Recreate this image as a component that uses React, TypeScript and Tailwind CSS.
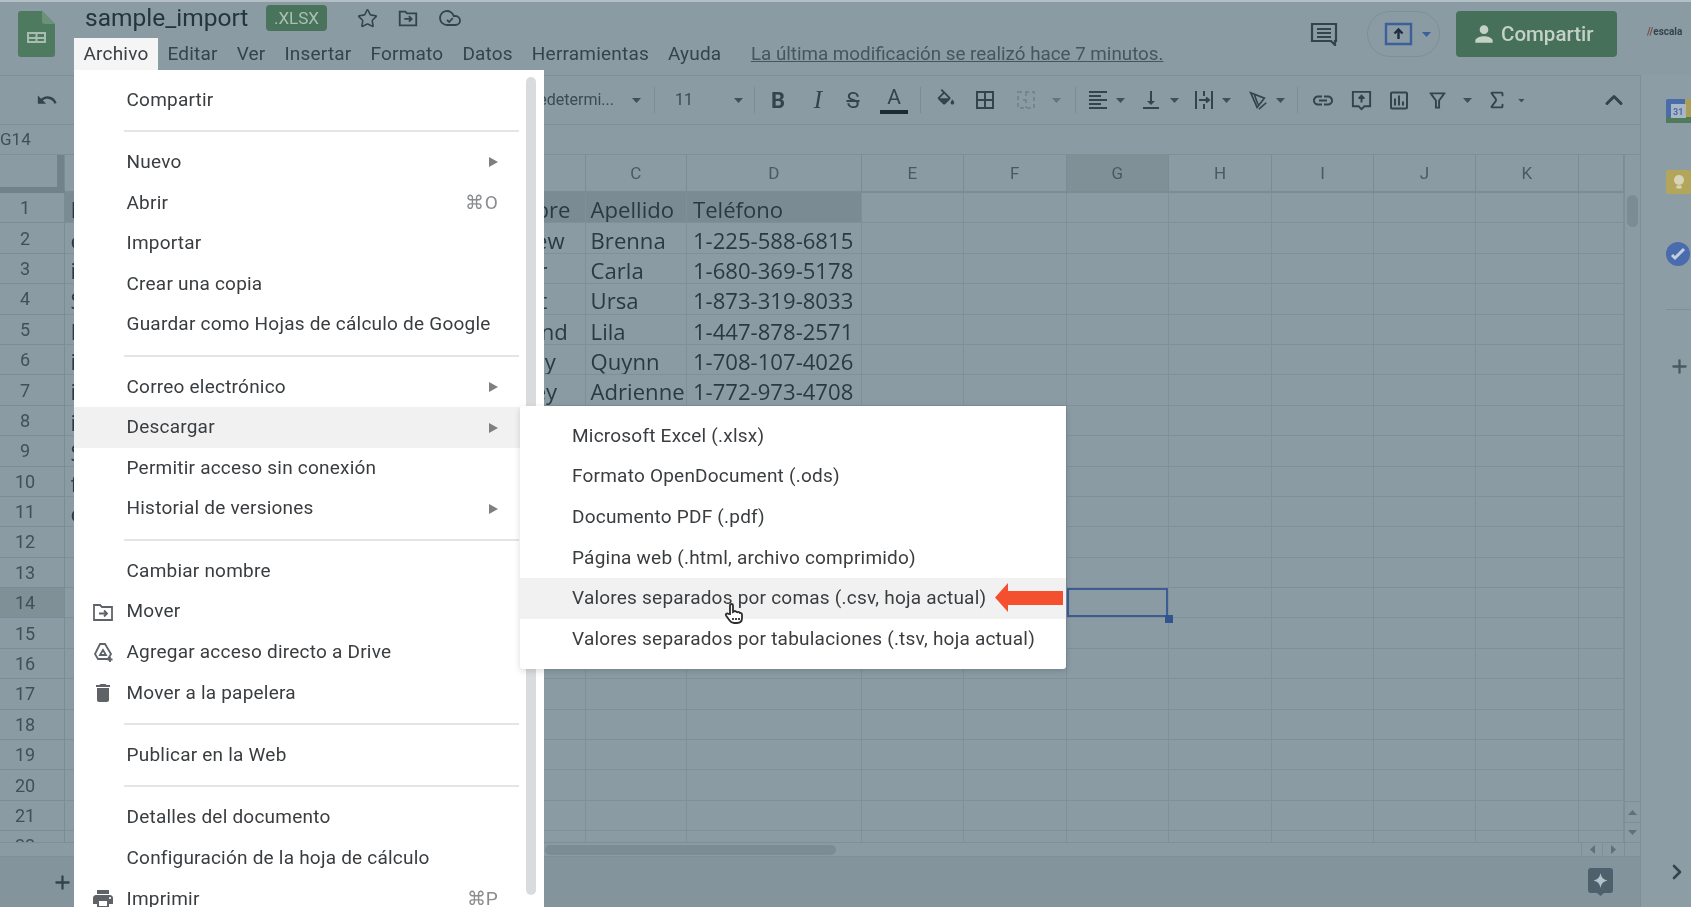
import { ChevronRight, ChevronUp, Plus, Sigma, Star } from "lucide-react";

const cols = [
  "w-[414px]",
  "w-[106.6px]",
  "w-[101.4px]",
  "w-[174.7px]",
  "w-[102.3px]",
  "w-[102.6px]",
  "w-[102.4px]",
  "w-[103px]",
  "w-[102px]",
  "w-[102px]",
  "w-[103px]",
  "w-[45px]",
];
const colNames = ["A", "B", "C", "D", "E", "F", "G", "H", "I", "J", "K", ""];

const sheetRows = [
  ["Empresa", "Nombre", "Apellido", "Teléfono"],
  ["eBay", "Andrew", "Brenna", "1-225-588-6815"],
  ["iTech", "Abner", "Carla", "1-680-369-5178"],
  ["Sanmina", "Albert", "Ursa", "1-873-319-8033"],
  ["Intel", "Armand", "Lila", "1-447-878-2571"],
  ["iNet", "Johnny", "Quynn", "1-708-107-4026"],
  ["iRobot", "Harvey", "Adrienne", "1-772-973-4708"],
  ["iCloud"],
  ["Sun"],
  ["fTech"],
  ["eTrade"],
];

const topMenus = ["Editar", "Ver", "Insertar", "Formato", "Datos", "Herramientas", "Ayuda"];

const mat = {
  undo: "M12.5 8c-2.65 0-5.05.99-6.9 2.6L2 7v9h9l-3.62-3.62c1.39-1.16 3.16-1.88 5.12-1.88 3.54 0 6.55 2.31 7.6 5.5l2.37-.78C21.08 11.03 17.15 8 12.5 8z",
  fill: "M16.56 8.94L7.62 0 6.21 1.41l2.38 2.38-5.15 5.15c-.59.59-.59 1.54 0 2.12l5.5 5.5c.29.29.68.44 1.06.44s.77-.15 1.06-.44l5.5-5.5c.59-.58.59-1.53 0-2.12zM5.21 10L10 5.21 14.79 10H5.21zM19 11.5s-2 2.17-2 3.5c0 1.1.9 2 2 2s2-.9 2-2c0-1.33-2-3.5-2-3.5z",
  borders: "M3 3v18h18V3H3zm8 16H5v-6h6v6zm0-8H5V5h6v6zm8 8h-6v-6h6v6zm0-8h-6V5h6v6z",
  align: "M15 15H3v2h12v-2zm0-8H3v2h12V7zM3 13h18v-2H3v2zm0 8h18v-2H3v2zM3 3v2h18V3H3z",
  valign: "M16 13h-3V3h-2v10H8l4 4 4-4zM4 19v2h16v-2H4z",
  link: "M3.9 12c0-1.71 1.39-3.1 3.1-3.1h4V7H7c-2.76 0-5 2.24-5 5s2.24 5 5 5h4v-1.9H7c-1.71 0-3.1-1.39-3.1-3.1zM8 13h8v-2H8v2zm9-6h-4v1.9h4c1.71 0 3.1 1.39 3.1 3.1s-1.39 3.1-3.1 3.1h-4V17h4c2.76 0 5-2.24 5-5s-2.24-5-5-5z",
  chart: "M19 3H5c-1.1 0-2 .9-2 2v14c0 1.1.9 2 2 2h14c1.1 0 2-.9 2-2V5c0-1.1-.9-2-2-2zm0 16H5V5h14v14zM7 10h2v7H7zm4-3h2v10h-2zm4 6h2v4h-2z",
  trash: "M6 19c0 1.1.9 2 2 2h8c1.1 0 2-.9 2-2V7H6v12zM19 4h-3.5l-1-1h-5l-1 1H5v2h14V4z",
  print: "M19 8H5c-1.66 0-3 1.34-3 3v6h4v4h12v-4h4v-6c0-1.66-1.34-3-3-3zm-3 11H8v-5h8v5zm3-7c-.55 0-1-.45-1-1s.45-1 1-1 1 .45 1 1-.45 1-1 1zm-1-9H6v4h12V3z",
  person: "M12 12c2.21 0 4-1.79 4-4s-1.79-4-4-4-4 1.79-4 4 1.79 4 4 4zm0 2c-2.67 0-8 1.34-8 4v2h16v-2c0-2.66-5.33-4-8-4z",
};

function MatIcon({ d, className }: { d: string; className?: string }) {
  return (
    <svg viewBox="0 0 24 24" className={className} fill="currentColor">
      <path d={d} />
    </svg>
  );
}

function Caret({ className }: { className?: string }) {
  return (
    <span className={`flex w-4 justify-center ${className ?? ""}`}>
      <svg width="9" height="5" viewBox="0 0 9 5" fill="#3f5057">
        <path d="M0 0h9L4.5 5z" />
      </svg>
    </span>
  );
}

function Sep({ className }: { className?: string }) {
  return <span className={`h-[26px] w-px bg-[#7b8c95] ${className ?? ""}`} />;
}

function ToolIcon({ className, children }: { className?: string; children: React.ReactNode }) {
  return <span className={`flex h-6 w-6 items-center justify-center text-[#33444b] ${className ?? ""}`}>{children}</span>;
}

function Toolbar() {
  return (
    <div className="flex h-[50px] items-center border-y border-[#7e8f98] bg-[#8a9ba4] pl-[36px] text-[#33444b]">
      <MatIcon d={mat.undo} className="h-[24px] w-[22px]" />
      <span className="w-[556px] text-right text-[16px] text-[#3a4b52]">Predetermi...</span>
      <Caret className="ml-[14px]" />
      <Sep className="ml-[10px]" />
      <span className="ml-[20px] w-[15px] text-[16px] text-[#3a4b52]">11</span>
      <Caret className="ml-[40px]" />
      <Sep className="ml-[8px]" />
      <ToolIcon className="ml-[11px] text-[22px] font-bold">B</ToolIcon>
      <ToolIcon className="ml-[16px] font-['Liberation_Serif',serif] text-[25px] font-medium italic">I</ToolIcon>
      <ToolIcon className="ml-[11px] text-[22px] line-through">S</ToolIcon>
      <ToolIcon className="ml-[17px] flex-col text-[21px] leading-[21px]">
        A<span className="mt-[2px] h-[4px] w-[28px] shrink-0 bg-[#1c2b33]" />
      </ToolIcon>
      <Sep className="ml-[14px]" />
      <ToolIcon className="ml-[13px]">
        <MatIcon d={mat.fill} className="h-[22px] w-[22px]" />
      </ToolIcon>
      <ToolIcon className="ml-[15px]">
        <MatIcon d={mat.borders} className="h-[24px] w-[24px]" />
      </ToolIcon>
      <ToolIcon className="ml-[17px] text-[#75868e]">
        <svg viewBox="0 0 24 24" className="h-6 w-6" fill="none" stroke="currentColor" strokeWidth="2" strokeDasharray="4 3">
          <path d="M4 4h16v16H4zM12 4v16" />
          <path d="M9 12h6" />
        </svg>
      </ToolIcon>
      <Caret className="ml-[10px] opacity-50" />
      <Sep className="ml-[11px]" />
      <ToolIcon className="ml-[10px]">
        <MatIcon d={mat.align} className="h-6 w-6" />
      </ToolIcon>
      <Caret className="ml-[2px]" />
      <ToolIcon className="ml-[11px]">
        <MatIcon d={mat.valign} className="h-6 w-6" />
      </ToolIcon>
      <Caret className="ml-[3px]" />
      <ToolIcon className="ml-[10px]">
        <svg viewBox="0 0 24 24" className="h-6 w-6" fill="none" stroke="currentColor" strokeWidth="2">
          <path d="M4 3v18M20 3v18M12 3v5M12 16v5M7 12h10M14 9.500l3 2.500-3 2.500" />
        </svg>
      </ToolIcon>
      <Caret className="ml-[2px]" />
      <ToolIcon className="ml-[12px]">
        <svg viewBox="0 0 24 24" className="h-[22px] w-[22px]" fill="none" stroke="currentColor" strokeWidth="1.8">
          <path d="M4 4l15 6-8 10zM8 6l4 11M21 15l-8 7" />
        </svg>
      </ToolIcon>
      <Caret className="ml-[2px]" />
      <Sep className="ml-[9px]" />
      <ToolIcon className="ml-[13px]">
        <MatIcon d={mat.link} className="h-[25px] w-[25px]" />
      </ToolIcon>
      <ToolIcon className="ml-[14px]">
        <svg viewBox="0 0 24 24" className="h-[23px] w-[23px]" fill="none" stroke="currentColor" strokeWidth="2">
          <path d="M3 3h18v15h-6l-3 3-3-3H3zM12 14V7M9 10l3-3 3 3" />
        </svg>
      </ToolIcon>
      <ToolIcon className="ml-[14px]">
        <MatIcon d={mat.chart} className="h-[27px] w-[27px]" />
      </ToolIcon>
      <ToolIcon className="ml-[14px]">
        <svg viewBox="0 0 24 24" className="h-[19px] w-[19px]" fill="none" stroke="currentColor" strokeWidth="2.4">
          <path d="M2 3h20M4 4l6 8v9h4v-9l6-8" />
        </svg>
      </ToolIcon>
      <Caret className="ml-[10px]" />
      <ToolIcon className="ml-[10px]">
        <Sigma size={22} strokeWidth={2} />
      </ToolIcon>
      <Caret className="ml-[4px] scale-75" />
      <ChevronUp className="ml-auto mr-[12px] h-7 w-7" strokeWidth={2.6} />
    </div>
  );
}

function Header() {
  return (
    <div className="flex h-[75px] shrink-0 border-t-2 border-[#b3bfc5] bg-[#8a9ba4]">
      <svg width="37" height="46" viewBox="0 0 37 46" className="ml-[18px] mt-[9px] shrink-0">
        <path d="M3 0H24L37 13V43a3 3 0 0 1-3 3H3a3 3 0 0 1-3-3V3a3 3 0 0 1 3-3z" fill="#4e7a60" />
        <path d="M24 0L37 13H27a3 3 0 0 1-3-3z" fill="#6b9279" />
        <path d="M9 21h19v11H9zM11 23v3h6.5v-3zM19.500 23v3H26v-3zM11 28v2h6.500v-2zM19.500 28v2H26v-2z" fill="#a9bcb0" fillRule="evenodd" />
      </svg>
      <div className="ml-[18.5px] flex flex-col">
        <div className="flex h-[34.7px] items-center pl-[11.5px] pb-[2px]">
          <span className="w-[181px] text-[24.5px] text-[#25353c]">sample_import</span>
          <span className="flex h-[26px] w-[61px] items-center justify-center rounded-[4px] bg-[#49735a] text-[17px] text-[#a9c0b2]">
            .XLSX
          </span>
          <Star className="ml-[30px] h-[21px] w-[21px] text-[#33444b]" strokeWidth={1.8} />
          <svg viewBox="0 0 24 24" className="ml-[19px] h-[22px] w-[22px] text-[#33444b]" fill="none" stroke="currentColor" strokeWidth="2">
            <path d="M3 5h6l2 2h10v13H3zM8 13h8M13 10l3 3-3 3" />
          </svg>
          <svg viewBox="0 0 24 24" className="ml-[19px] h-[24px] w-[24px] text-[#33444b]" fill="none" stroke="currentColor" strokeWidth="1.8">
            <path d="M17.5 19H9a7 7 0 1 1 6.71-9h1.79a4.5 4.5 0 1 1 0 9Z" />
            <path d="M9 14l2.2 2 3.6-4" />
          </svg>
        </div>
        <div className="flex h-[33.3px] items-center pt-[1px] text-[19px] tracking-[0.2px] text-[#33444b]">
          <span className="flex h-full items-center bg-[#f4f5f4] pl-[10px] pr-[9.5px] text-[#3c4043]">Archivo</span>
          {topMenus.map((m) => (
            <span key={m} className="px-[9.5px]">
              {m}
            </span>
          ))}
          <span className="ml-[20px] text-[18.8px] tracking-normal text-[#46565d] underline">La última modificación se realizó hace 7 minutos.</span>
        </div>
      </div>
      <div className="ml-auto flex items-start pt-[9px]">
        <svg viewBox="0 0 28 24" className="mt-[11px] h-[24px] w-[28px] text-[#33444b]" fill="none" stroke="currentColor" strokeWidth="2.2">
          <path d="M2 2h24v17h-1v4l-4-4H2zM7 7h14M7 11h14M7 15h14" />
        </svg>
        <div className="ml-[29px] flex h-[46px] w-[73px] items-center rounded-full border border-[#7e8f98] pl-[16px]">
          <svg viewBox="0 0 29 24" className="h-[24px] w-[29px] text-[#3d5f9b]" fill="none" stroke="currentColor" strokeWidth="2.4">
            <path d="M2 2h25v20H2z" stroke="#3d5f9b" />
            <path d="M14.5 17V8M10.5 11.5l4-4 4 4" stroke="#1f2d44" />
          </svg>
          <svg width="9" height="5" viewBox="0 0 9 5" fill="#3d5f9b" className="ml-[9px]">
            <path d="M0 0h9L4.5 5z" />
          </svg>
        </div>
        <div className="ml-[16px] flex h-[46px] w-[161px] items-center rounded-[4px] bg-[#47705a] pl-[15px] text-[#c3d1c8]">
          <MatIcon d={mat.person} className="h-[26px] w-[26px]" />
          <span className="ml-[4px] font-['Roboto',sans-serif] text-[20.5px] font-medium">Compartir</span>
        </div>
        <div className="ml-[30px] mr-[4px] mt-[16px] flex w-[40px] items-center text-[10px] font-bold leading-none text-[#33444b]">
          <span className="text-[#7b4a40]">//</span>escala
        </div>
      </div>
    </div>
  );
}

function SheetGrid() {
  return (
    <div className="flex min-h-0 flex-1 flex-col overflow-hidden">
      <div className="flex h-[38px] shrink-0 text-[#4a5a61]">
        <div className="relative h-full w-[65px] shrink-0 border-r border-[#7b8c95] border-b-[6px] border-b-[#71828b]">
          <span className="absolute right-0 top-0 h-full w-[7px] bg-[#71828b]" />
        </div>
        {cols.map((c, i) => (
          <div
            key={i}
            className={`${c} flex shrink-0 items-center justify-center border-r border-b-2 border-[#7b8c95] pt-[2px] text-[17px] ${i === 6 ? "bg-[#7f9097]" : ""}`}
          >
            {colNames[i]}
          </div>
        ))}
      </div>
      {Array.from({ length: 22 }, (_, r) => (
        <div key={r} className="flex h-[30.4px] shrink-0">
          <div
            className={`flex w-[65px] shrink-0 items-center justify-center border-r border-b border-[#7b8c95] pr-[14px] font-['Roboto',sans-serif] text-[18px] text-[#3f5057] ${r === 13 ? "bg-[#7f9097]" : ""}`}
          >
            {r + 1}
          </div>
          {cols.map((c, i) => (
            <div
              key={i}
              className={`${c} relative flex shrink-0 items-center overflow-hidden whitespace-nowrap border-r border-b border-[#7f9099] pt-[4px] font-['Open_Sans',sans-serif] text-[22.1px] text-[#2a3a41] ${r === 0 && i < 4 ? "bg-[#7a8b94]" : ""} ${i === 0 ? "pl-[5.5px]" : i === 2 ? "pl-[5px]" : "pl-[6px]"}`}
            >
              {sheetRows[r]?.[i]}
              {r === 13 && i === 6 && <span className="absolute inset-0 border-2 border-[#3d5c94]" />}
            </div>
          ))}
        </div>
      ))}
    </div>
  );
}

function BottomBars() {
  return (
    <>
      <div className="flex h-[15px] shrink-0 items-center border-y border-[#7e8f98] bg-[#8a9ba4]">
        <div className="ml-[545px] h-[10px] w-[291px] rounded-full bg-[#7b8c95]" />
        <div className="ml-auto flex h-full">
          <span className="flex w-[21px] items-center justify-center border-l border-[#7e8f98]">
            <svg width="5" height="9" viewBox="0 0 5 9" fill="#5f7078"><path d="M5 0v9L0 4.5z" /></svg>
          </span>
          <span className="flex w-[22px] items-center justify-center border-l border-[#7e8f98]">
            <svg width="5" height="9" viewBox="0 0 5 9" fill="#5f7078"><path d="M0 0v9l5-4.5z" /></svg>
          </span>
          <span className="w-[16px] border-l border-[#7e8f98]" />
        </div>
      </div>
      <div className="flex h-[50px] shrink-0 items-center bg-[#84949c]">
        <Plus className="ml-[52px] h-[21px] w-[21px] text-[#33444b]" strokeWidth={2.6} />
        <svg viewBox="0 0 25 28" className="ml-auto mr-[27px] h-[28px] w-[25px]">
          <path d="M3 0h19a3 3 0 0 1 3 3v19a3 3 0 0 1-3 3h-6l-3.5 3L9 25H3a3 3 0 0 1-3-3V3a3 3 0 0 1 3-3z" fill="#4e606c" />
          <path d="M12.5 5c.8 4.400 2.600 6.200 7 7.500-4.400 1.300-6.200 3.100-7 7.500-.8-4.400-2.600-6.200-7-7.500 4.400-1.300 6.200-3.100 7-7.500z" fill="#b4c1c8" />
        </svg>
      </div>
    </>
  );
}

function Sidebar() {
  return (
    <div className="flex w-[51px] flex-col border-l border-[#7e8f98] bg-[#8d9da5] pl-[25px]">
      <svg viewBox="0 0 25 24" className="mt-[24px] h-[24px] w-[25px] shrink-0">
        <rect width="25" height="24" rx="2" fill="#4a6bac" />
        <rect x="19" y="0" width="6" height="18" fill="#ab9f55" />
        <rect x="0" y="18" width="25" height="6" fill="#4f7a5c" />
        <rect x="5" y="5" width="15" height="14" fill="#a9b6c4" />
        <text x="7" y="16" fontSize="9" fontWeight="bold" fill="#4a6bac" fontFamily="Roboto, sans-serif">31</text>
      </svg>
      <svg viewBox="0 0 25 24" className="mt-[47px] h-[24px] w-[25px] shrink-0">
        <rect width="25" height="24" rx="2" fill="#b3a65a" />
        <circle cx="13" cy="10" r="5" fill="#d7d4b8" />
        <rect x="10.500" y="15.500" width="5" height="3" fill="#d7d4b8" />
      </svg>
      <svg viewBox="0 0 24 24" className="mt-[48px] h-[24px] w-[24px] shrink-0">
        <circle cx="12" cy="12" r="12" fill="#4a6bac" />
        <path d="M6 13l3 3 9-9" stroke="#c3cfe0" strokeWidth="3" fill="none" />
      </svg>
      <div className="mt-[43px] h-px w-full bg-[#7e8f98]" />
      <Plus className="ml-[3px] mt-[46px] h-[21px] w-[21px] text-[#4a5a61]" strokeWidth={2.6} />
      <ChevronRight className="-ml-[1px] mt-auto mb-[23px] h-[24px] w-[24px] text-[#33444b]" strokeWidth={2.6} />
    </div>
  );
}

type Item = { label?: string; icon?: React.ReactNode; arrow?: boolean; shortcut?: string; hover?: boolean; sep?: boolean };

const ic = "h-6 w-6";
const menuItems: Item[] = [
  { label: "Compartir" },
  { sep: true },
  { label: "Nuevo", arrow: true },
  { label: "Abrir", shortcut: "⌘O" },
  { label: "Importar" },
  { label: "Crear una copia" },
  { label: "Guardar como Hojas de cálculo de Google" },
  { sep: true },
  { label: "Correo electrónico", arrow: true },
  { label: "Descargar", arrow: true, hover: true },
  { label: "Permitir acceso sin conexión" },
  { label: "Historial de versiones", arrow: true },
  { sep: true },
  { label: "Cambiar nombre" },
  {
    label: "Mover",
    icon: (
      <svg viewBox="0 0 24 24" className={ic} fill="none" stroke="currentColor" strokeWidth="1.8">
        <path d="M3 5h6l2 2h10v13H3zM8 13.500h8M13 10.500l3 3-3 3" />
      </svg>
    ),
  },
  {
    label: "Agregar acceso directo a Drive",
    icon: (
      <svg viewBox="0 0 24 24" className={ic} fill="none" stroke="currentColor" strokeWidth="1.8">
        <path d="M9 4h5l6 10-3 5H7l-3-5zM9 15l3-5 3 5zM19 17v5M16.500 19.500h5" />
      </svg>
    ),
  },
  { label: "Mover a la papelera", icon: <MatIcon d={mat.trash} className={ic} /> },
  { sep: true },
  { label: "Publicar en la Web" },
  { sep: true },
  { label: "Detalles del documento" },
  { label: "Configuración de la hoja de cálculo" },
  { label: "Imprimir", shortcut: "⌘P", icon: <MatIcon d={mat.print} className={ic} /> },
];

const downloadItems = [
  "Microsoft Excel (.xlsx)",
  "Formato OpenDocument (.ods)",
  "Documento PDF (.pdf)",
  "Página web (.html, archivo comprimido)",
  "Valores separados por comas (.csv, hoja actual)",
  "Valores separados por tabulaciones (.tsv, hoja actual)",
];

function FileMenu() {
  return (
    <div className="absolute left-[73.5px] top-[70px] h-[837px] w-[470px] bg-white pt-[9.5px] font-['Roboto',sans-serif] text-[19px] tracking-[0.22px] text-[#3a3d40]">
      <div className="absolute left-[452px] top-[7px] h-[818px] w-[10px] rounded-full bg-[#d9dbdd]" />
      {menuItems.map((it, i) =>
        it.sep ? (
          <div key={i} className="flex h-[21.8px] items-center pl-[50.5px] pr-[25px]">
            <div className="h-[2px] w-full bg-[#e4e5e7]" />
          </div>
        ) : (
          <div key={i} className={`relative flex h-[40.6px] items-center pl-[17px] pr-[45.5px] ${it.hover ? "bg-[#f1f1f1]" : ""}`}>
            <span className="flex w-6 justify-center text-[#5f6368]">{it.icon}</span>
            <span className="ml-[12px]">{it.label}</span>
            {it.shortcut && <span className="ml-auto text-[#8a8c8f]">{it.shortcut}</span>}
            {it.arrow && (
              <svg width="9" height="10" viewBox="0 0 9 10" fill="#7d7f82" className="ml-auto">
                <path d="M0 0l9 5-9 5z" />
              </svg>
            )}
          </div>
        ),
      )}
    </div>
  );
}

function DownloadMenu() {
  return (
    <div className="absolute left-[520px] top-[406px] w-[546px] rounded-l-[3px] rounded-b-[3px] bg-white py-[9.8px] font-['Roboto',sans-serif] text-[19px] tracking-[0.22px] text-[#3a3d40] shadow-[0_2px_6px_rgba(0,0,0,0.15)]">
      {downloadItems.map((t, i) => (
        <div key={t} className={`flex h-[40.6px] items-center pl-[52px] ${i === 4 ? "bg-[#f1f1f1]" : ""}`}>
          {t}
        </div>
      ))}
    </div>
  );
}

export default function App() {
  return (
    <div className="relative flex h-[907px] w-[1691px] flex-col overflow-hidden bg-[#8a9ba4] font-['Roboto',sans-serif] blur-[0.6px]">
      <Header />
      <div className="flex min-h-0 flex-1">
        <div className="flex w-[1640px] shrink-0 flex-col">
          <Toolbar />
          <div className="flex h-[30px] shrink-0 items-center border-b border-[#7e8f98] text-[17px] text-[#3f5057]">G14</div>
          <div className="relative flex min-h-0 flex-1 flex-col">
            <SheetGrid />
            <div className="absolute right-0 top-0 flex h-full w-[16px] flex-col border-l border-[#7e8f98] bg-[#8a9ba4]">
              <div className="mx-auto mt-[40px] h-[32px] w-[11px] rounded-full bg-[#7b8c95]" />
              <span className="mt-auto flex h-[21px] items-center justify-center border-t border-[#7e8f98]">
                <svg width="9" height="5" viewBox="0 0 9 5" fill="#5f7078"><path d="M0 5h9L4.500 0z" /></svg>
              </span>
              <span className="flex h-[20px] items-center justify-center border-t border-[#7e8f98]">
                <svg width="9" height="5" viewBox="0 0 9 5" fill="#5f7078"><path d="M0 0h9L4.500 5z" /></svg>
              </span>
            </div>
          </div>
          <BottomBars />
        </div>
        <Sidebar />
      </div>

      <FileMenu />
      <DownloadMenu />

      <div className="absolute left-[1165px] top-[615px] h-[8px] w-[8px] bg-[#33558e]" />
      <svg viewBox="0 0 68 29" className="absolute left-[995px] top-[583px] h-[29px] w-[68px]">
        <path d="M0 14.500L13 0v8h55v14H13v7z" fill="#f4502f" />
      </svg>
      <svg viewBox="0 0 24 24" className="absolute left-[722px] top-[601px] h-[24px] w-[24px]" fill="#ffffff" stroke="#2e2e2e" strokeWidth="1.8">
        <path d="M8 13V4.500a1.500 1.500 0 0 1 3 0V11l1-.5a1.500 1.500 0 0 1 2.500.5l1 .2a1.500 1.500 0 0 1 2.300.8c1.200-.3 2.200.4 2.200 1.800V17c0 3-2 5-5 5h-3c-2 0-3.300-.9-4.400-2.500L4 14.500c-.8-1.300 1-2.800 2.200-1.700z" />
        <path d="M11 17v2M14 17v2M17 17v2" />
      </svg>
    </div>
  );
}
